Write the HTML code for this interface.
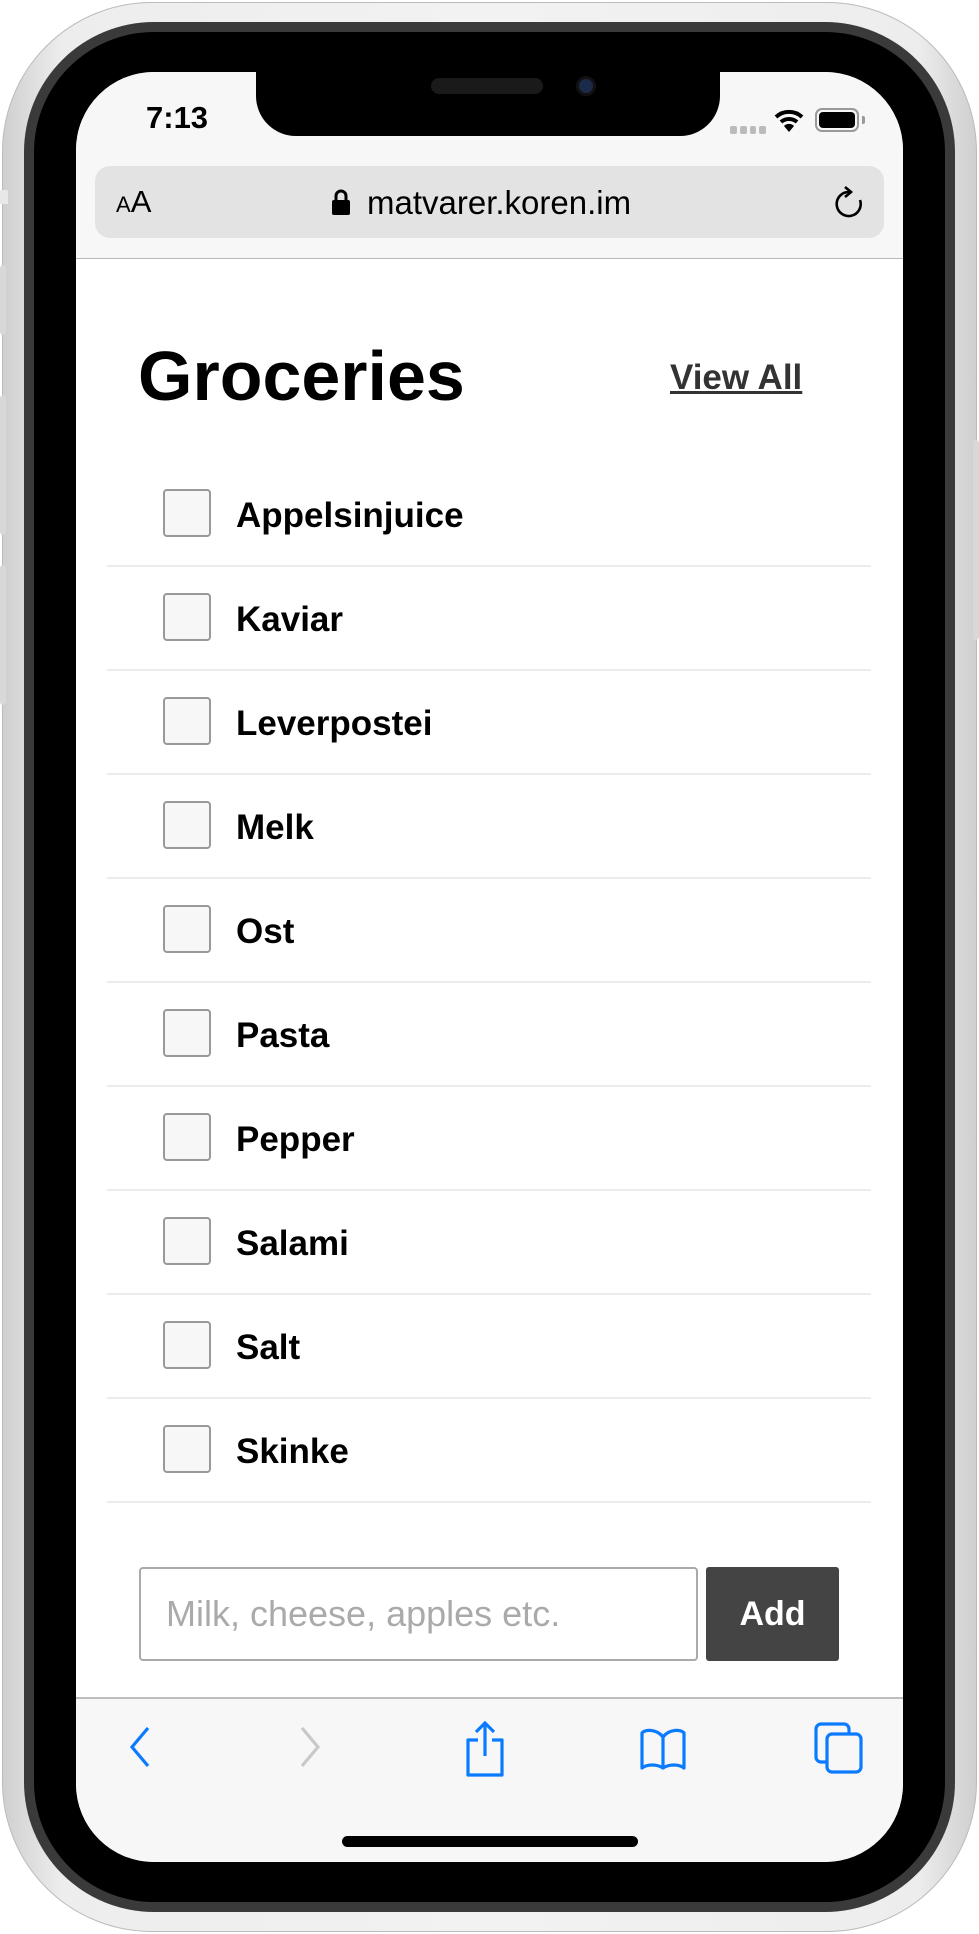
<!DOCTYPE html>
<html><head><meta charset="utf-8"><style>
*{margin:0;padding:0;box-sizing:border-box}
html,body{width:979px;height:1934px;background:#fff;overflow:hidden;font-family:"Liberation Sans",Arial,sans-serif}
.abs{position:absolute}
.silver{left:2px;top:2px;width:975px;height:1930px;border-radius:150px;background:linear-gradient(90deg,#cfcfcf,#ededed 6%,#f2f2f2 50%,#ededed 94%,#cfcfcf);border:1px solid #bbb}
.ring{left:24px;top:22px;width:931px;height:1890px;border-radius:130px;background:#3a3a3a}
.black{left:34px;top:32px;width:911px;height:1870px;border-radius:120px;background:#000}
.screen{left:76px;top:72px;width:827px;height:1790px;border-radius:78px;background:#fff;overflow:hidden}
.row{position:absolute;left:31px;width:764px;height:104px;border-bottom:2px solid #ececec}
.cb{position:absolute;left:56px;top:26px;width:48px;height:48px;border:2px solid #999;border-radius:4px;background:#f7f7f7}
.lbl{position:absolute;left:129px;top:28px;font-weight:bold;font-size:35px;color:#000;line-height:50px}
</style></head><body>
<div class="abs silver"></div>
<div class="abs" style="left:0;top:190px;width:8px;height:14px;background:#e8e8e8"></div>
<div class="abs" style="left:0;top:265px;width:6px;height:70px;background:#d8d8d8;border-radius:3px"></div>
<div class="abs" style="left:0;top:395px;width:6px;height:140px;background:#d8d8d8;border-radius:3px"></div>
<div class="abs" style="left:0;top:565px;width:6px;height:140px;background:#d8d8d8;border-radius:3px"></div>
<div class="abs" style="left:973px;top:440px;width:6px;height:200px;background:#d8d8d8;border-radius:3px"></div>
<div class="abs ring"></div>
<div class="abs black"></div>
<div class="abs screen">
  <div class="abs" style="left:0;top:0;width:827px;height:187px;background:#f7f7f7;border-bottom:1px solid #b8b8b8"></div>
  <div class="abs" style="left:180px;top:-10px;width:464px;height:74px;background:#000;border-radius:0 0 40px 40px"></div>
  <div class="abs" style="left:355px;top:6px;width:112px;height:16px;background:#1a1a1a;border-radius:8px"></div>
  <div class="abs" style="left:500px;top:4px;width:20px;height:20px;background:#1c2a4a;border-radius:50%;border:3px solid #111"></div>
  <div class="abs" style="left:70px;top:28px;font-size:31px;font-weight:bold;color:#000">7:13</div>
  <div class="abs" style="left:654px;top:54px;width:36px;height:8px;display:flex;gap:3px"><i style="flex:1;background:#bbb;border-radius:2px"></i><i style="flex:1;background:#bbb;border-radius:2px"></i><i style="flex:1;background:#bbb;border-radius:2px"></i><i style="flex:1;background:#bbb;border-radius:2px"></i></div>
  <svg class="abs" style="left:698px;top:36px" width="30" height="26" viewBox="0 0 30 26"><path d="M2 9 A19 19 0 0 1 28 9" stroke="#000" stroke-width="4" fill="none"/><path d="M7 14 A12 12 0 0 1 23 14" stroke="#000" stroke-width="4" fill="none"/><path d="M15 24 L10 18 A7 7 0 0 1 20 18 Z" fill="#000"/></svg>
  <div class="abs" style="left:739px;top:36px;width:44px;height:24px;border:2px solid #999;border-radius:7px;padding:2px"><div style="width:100%;height:100%;background:#000;border-radius:4px"></div></div>
  <div class="abs" style="left:786px;top:44px;width:3px;height:8px;background:#999;border-radius:0 2px 2px 0"></div>
  <div class="abs" style="left:19px;top:94px;width:789px;height:72px;background:#e3e3e3;border-radius:15px"></div>
  <div class="abs" style="left:40px;top:112px;color:#000;line-height:36px"><span style="font-size:22px">A</span><span style="font-size:31px">A</span></div>
  <svg class="abs" style="left:255px;top:116px" width="20" height="28" viewBox="0 0 20 28"><path d="M5 12 V8 a5 5 0 0 1 10 0 V12" stroke="#000" stroke-width="3" fill="none"/><rect x="1" y="12" width="18" height="15" rx="2" fill="#000"/></svg>
  <div class="abs" style="left:291px;top:112px;font-size:33px;color:#000;line-height:38px">matvarer.koren.im</div>
  <svg class="abs" style="left:757px;top:114px" width="32" height="34" viewBox="0 0 32 34"><path d="M16 6 A12 12 0 1 0 27 14" stroke="#000" stroke-width="2.6" fill="none"/><path d="M12 1 L18 6 L12 11" stroke="#000" stroke-width="2.6" fill="none"/></svg>

  <div class="abs" style="left:62px;top:264px;font-size:70px;font-weight:bold;color:#000;line-height:80px">Groceries</div>
  <div class="abs" style="left:594px;top:284px;font-size:35px;font-weight:bold;color:#333;text-decoration:underline;line-height:44px">View All</div>

  <div class="row" style="top:391px"><div class="cb"></div><div class="lbl">Appelsinjuice</div></div>
  <div class="row" style="top:495px"><div class="cb"></div><div class="lbl">Kaviar</div></div>
  <div class="row" style="top:599px"><div class="cb"></div><div class="lbl">Leverpostei</div></div>
  <div class="row" style="top:703px"><div class="cb"></div><div class="lbl">Melk</div></div>
  <div class="row" style="top:807px"><div class="cb"></div><div class="lbl">Ost</div></div>
  <div class="row" style="top:911px"><div class="cb"></div><div class="lbl">Pasta</div></div>
  <div class="row" style="top:1015px"><div class="cb"></div><div class="lbl">Pepper</div></div>
  <div class="row" style="top:1119px"><div class="cb"></div><div class="lbl">Salami</div></div>
  <div class="row" style="top:1223px"><div class="cb"></div><div class="lbl">Salt</div></div>
  <div class="row" style="top:1327px"><div class="cb"></div><div class="lbl">Skinke</div></div>

  <div class="abs" style="left:63px;top:1495px;width:559px;height:94px;border:2px solid #aaa;border-radius:4px;background:#fff"></div>
  <div class="abs" style="left:90px;top:1521px;font-size:36px;color:#aaa;line-height:42px">Milk, cheese, apples etc.</div>
  <div class="abs" style="left:630px;top:1495px;width:133px;height:94px;background:#444;border-radius:3px;color:#fff;font-weight:bold;font-size:34px;text-align:center;line-height:94px">Add</div>

  <div class="abs" style="left:0;top:1625px;width:827px;height:170px;background:#f7f7f7;border-top:2px solid #bdbdbd"></div>
  <svg class="abs" style="left:48px;top:1652px" width="30" height="46" viewBox="0 0 30 46"><path d="M24 4 L8 23 L24 42" stroke="#0a7aff" stroke-width="3.2" fill="none"/></svg>
  <svg class="abs" style="left:220px;top:1652px" width="30" height="46" viewBox="0 0 30 46"><path d="M6 4 L22 23 L6 42" stroke="#c8c8c8" stroke-width="3.2" fill="none"/></svg>
  <svg class="abs" style="left:388px;top:1648px" width="42" height="58" viewBox="0 0 42 58"><path d="M14 20 H4 V55 H38 V20 H28" stroke="#0a7aff" stroke-width="3.2" fill="none" stroke-linejoin="round"/><path d="M21 36 V3 M12 12 L21 3 L30 12" stroke="#0a7aff" stroke-width="3.2" fill="none"/></svg>
  <svg class="abs" style="left:563px;top:1655px" width="48" height="44" viewBox="0 0 48 44"><path d="M24 10 C18 2 6 2 3 6 V41 C8 37 18 37 24 41 C30 37 40 37 45 41 V6 C42 2 30 2 24 10 Z M24 10 V41" stroke="#0a7aff" stroke-width="3.2" fill="none" stroke-linejoin="round"/></svg>
  <svg class="abs" style="left:738px;top:1650px" width="50" height="52" viewBox="0 0 50 52"><rect x="2" y="2" width="33" height="38" rx="5" stroke="#0a7aff" stroke-width="3.2" fill="none"/><rect x="13" y="12" width="34" height="38" rx="5" stroke="#0a7aff" stroke-width="3.2" fill="#f7f7f7"/></svg>
  <div class="abs" style="left:266px;top:1764px;width:296px;height:11px;background:#000;border-radius:6px"></div>
</div>
</body></html>
